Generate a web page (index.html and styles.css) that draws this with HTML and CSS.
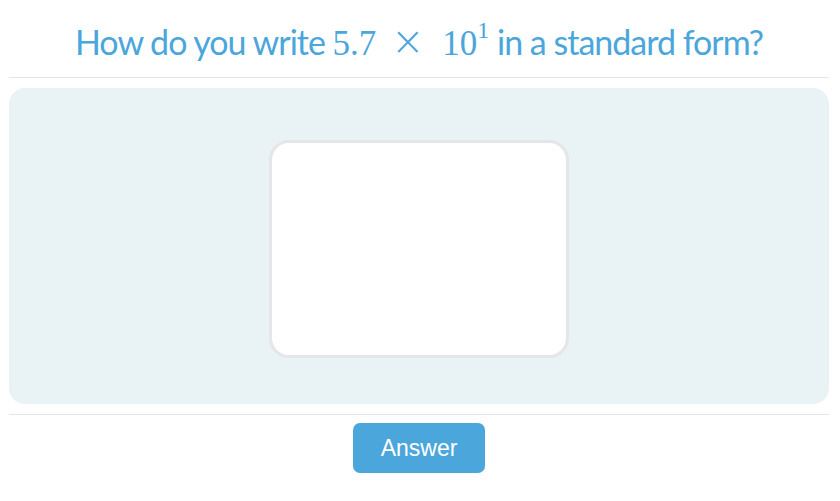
FILE: index.html
```html
<!DOCTYPE html>
<html lang="en">

<head>
  <meta charset="utf-8" />
  <title>Standard form</title>
  <link rel="stylesheet" href="styles.css">
</head>

<body>
  <div class="question">
    <h2 class="title">How do you write <span class="math">5.7 <span class="times">&times;</span> 10<sup>1</sup></span> in a standard form?</h2>
    <div class="work-area">
      <div class="answer-box"></div>
    </div>
    <div class="actions">
      <button type="button" class="answer-btn">Answer</button>
    </div>
  </div>
</body>

</html>
```
FILE: styles.css
```css
body {
  margin: 0;
  background: #fff;
  font-family: Lato, "Open Sans", sans-serif;
}

.question {
  padding: 0 11px 0 9px;
}

.title {
  margin: 0;
  padding: 21px 0 12px;
  text-align: center;
  font-weight: 400;
  font-size: 34px;
  letter-spacing: -1px;
  line-height: 42px;
  color: #4aa6db;
  border-bottom: 1px solid #e6e6e6;
}

.math {
  font-family: "Liberation Serif", "Times New Roman", serif;
  font-size: 35px;
  letter-spacing: 0;
}

.times {
  font-family: "DejaVu Sans", sans-serif;
  font-size: 40px;
  font-weight: 300;
  line-height: 0;
  margin: 0 9px 0 6px;
}

.math sup {
  font-size: 24px;
  line-height: 0;
  vertical-align: 17px;
}

.work-area {
  margin-top: 10px;
  height: 316px;
  background: #e9f2f5;
  border-radius: 16px;
  display: flex;
  justify-content: center;
  align-items: center;
}

.answer-box {
  margin-top: 5px;
  width: 294px;
  height: 212px;
  background: #fff;
  border: 3px solid #e4e6e9;
  border-radius: 20px;
}

.actions {
  margin-top: 10px;
  padding-top: 8px;
  border-top: 1px solid #e6e6e6;
  display: flex;
  justify-content: center;
}

.answer-btn {
  width: 132px;
  height: 50px;
  background: #4aa6db;
  color: #fff;
  border: none;
  border-radius: 7px;
  font-family: "Liberation Sans", Arial, sans-serif;
  font-size: 23px;
}
```
